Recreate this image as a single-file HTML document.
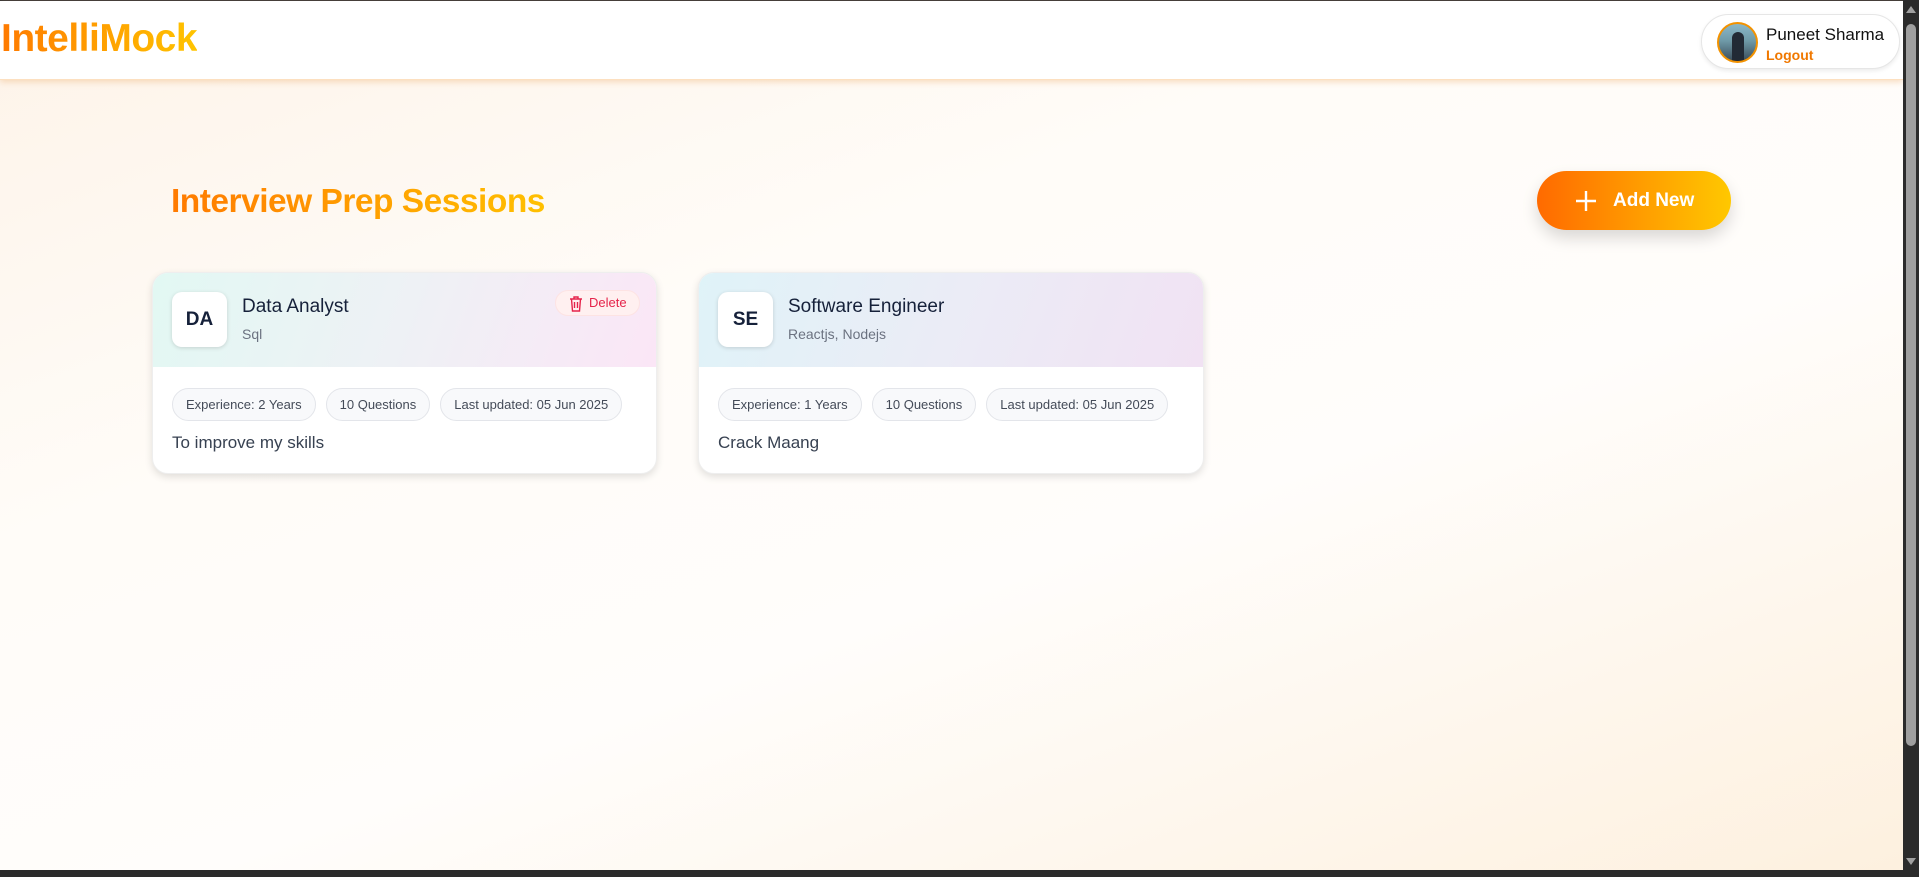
<!DOCTYPE html>
<html><head><meta charset="utf-8"><style>
*{box-sizing:border-box;margin:0;padding:0}
body{width:1919px;height:877px;overflow:hidden;font-family:"Liberation Sans",sans-serif;position:relative;
background:linear-gradient(160deg,#fdf3e8 0%,#fffcf8 35%,#fffdfb 60%,#fdf0de 100%);}
.top{position:absolute;left:0;top:0;width:1903px;height:1px;background:#333}
header{position:absolute;left:0;top:1px;width:1903px;height:79px;background:#fff;box-shadow:0 2px 6px rgba(240,180,120,.45);border-bottom:1px solid #fde0c0}
.logo{position:absolute;left:1px;top:16px;font-size:39px;font-weight:bold;letter-spacing:-0.5px;background:linear-gradient(90deg,#ff7a00,#ffc400);-webkit-background-clip:text;color:transparent}
.user{position:absolute;left:1701px;top:13px;width:199px;height:55px;border-radius:28px;background:#fff;border:1px solid #e6e6e6;box-shadow:0 2px 4px rgba(0,0,0,.08)}
.av{position:absolute;left:15px;top:7px;width:41px;height:41px;border-radius:50%;border:2px solid #f39200;background:linear-gradient(180deg,#8bb8c8 0%,#6f9aa8 45%,#3a4c5a 100%);overflow:hidden}
.av:after{content:"";position:absolute;left:13px;top:8px;width:12px;height:30px;border-radius:6px 6px 2px 2px;background:#222a35}
.name{position:absolute;left:64px;top:10px;font-size:17px;color:#111}
.lo{position:absolute;left:64px;top:32px;font-size:14px;font-weight:bold;color:#f07800}
.sb{position:absolute;right:0;top:0;width:16px;height:877px;background:#2b2b2b}
.thumb{position:absolute;left:3px;top:24px;width:10px;height:722px;border-radius:5px;background:#9f9f9f}
.up{position:absolute;left:3px;top:6px;border-left:5px solid transparent;border-right:5px solid transparent;border-bottom:7px solid #a0a0a0}
.dn{position:absolute;left:3px;bottom:12px;border-left:5px solid transparent;border-right:5px solid transparent;border-top:7px solid #a0a0a0}
.bot{position:absolute;left:0;bottom:0;width:1903px;height:7px;background:#2b2b2b}
h1{position:absolute;left:171px;top:183px;font-size:33.5px;font-weight:bold;letter-spacing:-0.5px;background:linear-gradient(90deg,#ff7a00,#ffc000);-webkit-background-clip:text;color:transparent}
.add{position:absolute;left:1537px;top:171px;width:194px;height:59px;border-radius:30px;background:linear-gradient(90deg,#ff6a00,#ffc800);box-shadow:0 8px 16px rgba(0,0,0,.15);color:#fff;font-weight:bold;font-size:19px}
.add svg{position:absolute;left:38px;top:19px}
.add span{position:absolute;left:76px;top:19px}
.card{position:absolute;top:272px;height:202px;border-radius:16px;background:#fff;border:1px solid #eee;box-shadow:0 3px 8px rgba(0,0,0,.12);overflow:hidden}
.hd{height:94px;position:relative}
.ic{position:absolute;left:19px;top:19px;width:55px;height:55px;border-radius:10px;background:#fff;box-shadow:0 1px 4px rgba(0,0,0,.15);font-weight:bold;font-size:19px;color:#16213a;text-align:center;line-height:55px}
.t{position:absolute;left:89px;top:23px;font-size:19px;color:#16213a}
.s{position:absolute;left:89px;top:53px;font-size:14px;color:#6b7280}
.del{position:absolute;left:402px;top:17px;width:85px;height:26px;border-radius:13px;background:#fff0f0;border:1px solid #fde3e3;color:#e5234a;font-size:13px;line-height:24px;padding-left:33px}
.del svg{position:absolute;left:13px;top:5px}
.chips{position:absolute;left:19px;top:115px;white-space:nowrap}
.chip{display:inline-block;height:33px;line-height:31px;border-radius:17px;border:1px solid #e3e5ea;background:#f8f9fb;font-size:13px;color:#444b58;padding:0 13px;margin-right:10px}
.d{position:absolute;left:19px;top:160px;font-size:17px;color:#374151}
</style></head><body>
<div class="top"></div>
<header><div class="logo">IntelliMock</div>
<div class="user"><div class="av"></div><div class="name">Puneet Sharma</div><div class="lo">Logout</div></div></header>
<h1>Interview Prep Sessions</h1>
<div class="add"><svg width="22" height="22" viewBox="0 0 22 22"><path d="M11 1v20M1 11h20" stroke="#fff" stroke-width="2.4"/></svg><span>Add New</span></div>

<div class="card" style="left:152px;width:505px">
<div class="hd" style="background:linear-gradient(110deg,#e2f8f3 0%,#eef1f5 50%,#fbe6f6 100%)">
<div class="ic">DA</div><div class="t">Data Analyst</div><div class="s">Sql</div>
<div class="del"><svg width="14" height="16" viewBox="0 0 14 16" fill="none" stroke="#e5234a" stroke-width="1.4"><path d="M1 3h12M5 3V1h4v2M2.5 3l1 12h7l1-12M5.5 6v6M8.5 6v6"/></svg>Delete</div>
</div>
<div class="chips"><span class="chip">Experience: 2 Years</span><span class="chip">10 Questions</span><span class="chip">Last updated: 05 Jun 2025</span></div>
<div class="d">To improve my skills</div>
</div>

<div class="card" style="left:698px;width:506px">
<div class="hd" style="background:linear-gradient(110deg,#dff3f8 0%,#ebecf6 50%,#f1e2f3 100%)">
<div class="ic">SE</div><div class="t">Software Engineer</div><div class="s">Reactjs, Nodejs</div>
</div>
<div class="chips"><span class="chip">Experience: 1 Years</span><span class="chip">10 Questions</span><span class="chip">Last updated: 05 Jun 2025</span></div>
<div class="d">Crack Maang</div>
</div>

<div class="sb"><div class="up"></div><div class="thumb"></div><div class="dn"></div></div>
<div class="bot"></div>
</body></html>
